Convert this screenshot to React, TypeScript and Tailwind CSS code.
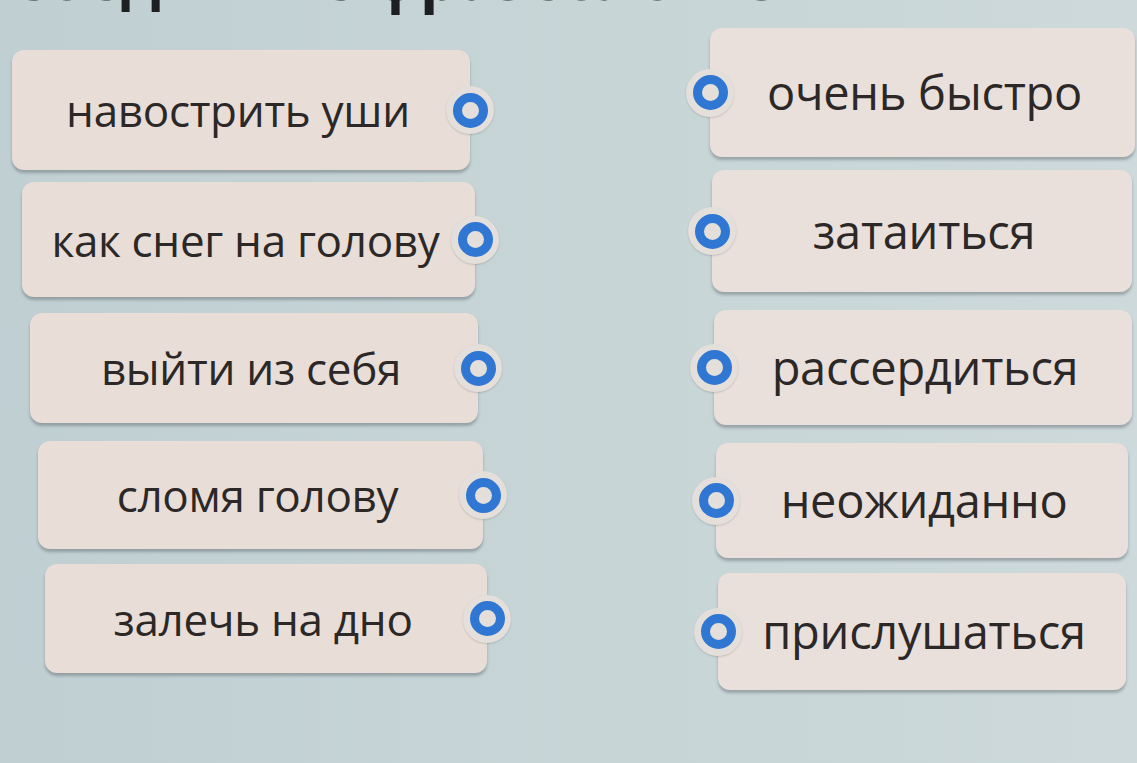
const left = [
  { text: "навострить уши", ml: "ml-[12px]", w: "w-[458px]", h: "h-[120px]", mt: "mt-[50px]" },
  { text: "как снег на голову", ml: "ml-[22px]", w: "w-[453px]", h: "h-[115px]", mt: "mt-[12px]" },
  { text: "выйти из себя", ml: "ml-[30px]", w: "w-[448px]", h: "h-[110px]", mt: "mt-[16px]" },
  { text: "сломя голову", ml: "ml-[38px]", w: "w-[445px]", h: "h-[108px]", mt: "mt-[18px]" },
  { text: "залечь на дно", ml: "ml-[45px]", w: "w-[442px]", h: "h-[109px]", mt: "mt-[15px]" },
]

const right = [
  { text: "очень быстро", w: "w-[425px]", h: "h-[129px]", mt: "mt-[28px]", ml: "ml-[710px]" },
  { text: "затаиться", w: "w-[420px]", h: "h-[122px]", mt: "mt-[13px]", ml: "ml-[712px]" },
  { text: "рассердиться", w: "w-[418px]", h: "h-[115px]", mt: "mt-[18px]", ml: "ml-[714px]" },
  { text: "неожиданно", w: "w-[412px]", h: "h-[115px]", mt: "mt-[18px]", ml: "ml-[716px]" },
  { text: "прислушаться", w: "w-[408px]", h: "h-[117px]", mt: "mt-[15px]", ml: "ml-[718px]" },
]

function Dot({ side }: { side: "left" | "right" }) {
  return (
    <div
      className={`absolute top-1/2 -translate-y-1/2 w-[48px] h-[48px] rounded-full bg-[#e4dfdb] flex items-center justify-center shadow-[0_1px_2px_rgba(0,0,0,0.15)] ${
        side === "right" ? "-right-[24px]" : "-left-[24px]"
      }`}
    >
      <div className="w-[35px] h-[35px] rounded-full border-[9px] border-[#2f77d2]" />
    </div>
  )
}

export default function App() {
  return (
    <div
      className="relative w-[1137px] h-[763px] overflow-hidden bg-gradient-to-r from-[#c0cfd2] via-[#c7d5d7] to-[#cdd9db]"
      style={{ fontFamily: '"Open Sans", "Noto Sans", sans-serif' }}
    >
      {/* heading, mostly above the photo's edge */}
      <h1 className="absolute left-[10px] -top-[53px] text-[60px] font-bold text-[#1d1f21] leading-none whitespace-nowrap">
        Соедините фразеологизмы
      </h1>

      <div className="flex">
        {/* left column */}
        <div className="flex flex-col w-[520px]">
          {left.map((c) => (
            <div
              key={c.text}
              className={`relative ${c.ml} ${c.w} ${c.h} ${c.mt} rounded-[12px] bg-[#e8ddd7] shadow-[0_3px_3px_rgba(60,70,75,0.35)] flex items-center justify-center`}
            >
              <span className="text-[44px] font-medium text-[#2b2827] tracking-[-0.3px] pr-[6px]">{c.text}</span>
              <Dot side="right" />
            </div>
          ))}
        </div>

        {/* right column */}
        <div className="flex flex-col -ml-[520px]">
          {right.map((c) => (
            <div
              key={c.text}
              className={`relative ${c.ml} ${c.w} ${c.h} ${c.mt} rounded-[12px] bg-[#eae0db] shadow-[0_3px_3px_rgba(60,70,75,0.35)] flex items-center justify-center`}
            >
              <span className="text-[47px] font-medium text-[#2b2827] tracking-[-0.3px] pl-[4px]">{c.text}</span>
              <Dot side="left" />
            </div>
          ))}
        </div>
      </div>
    </div>
  )
}
